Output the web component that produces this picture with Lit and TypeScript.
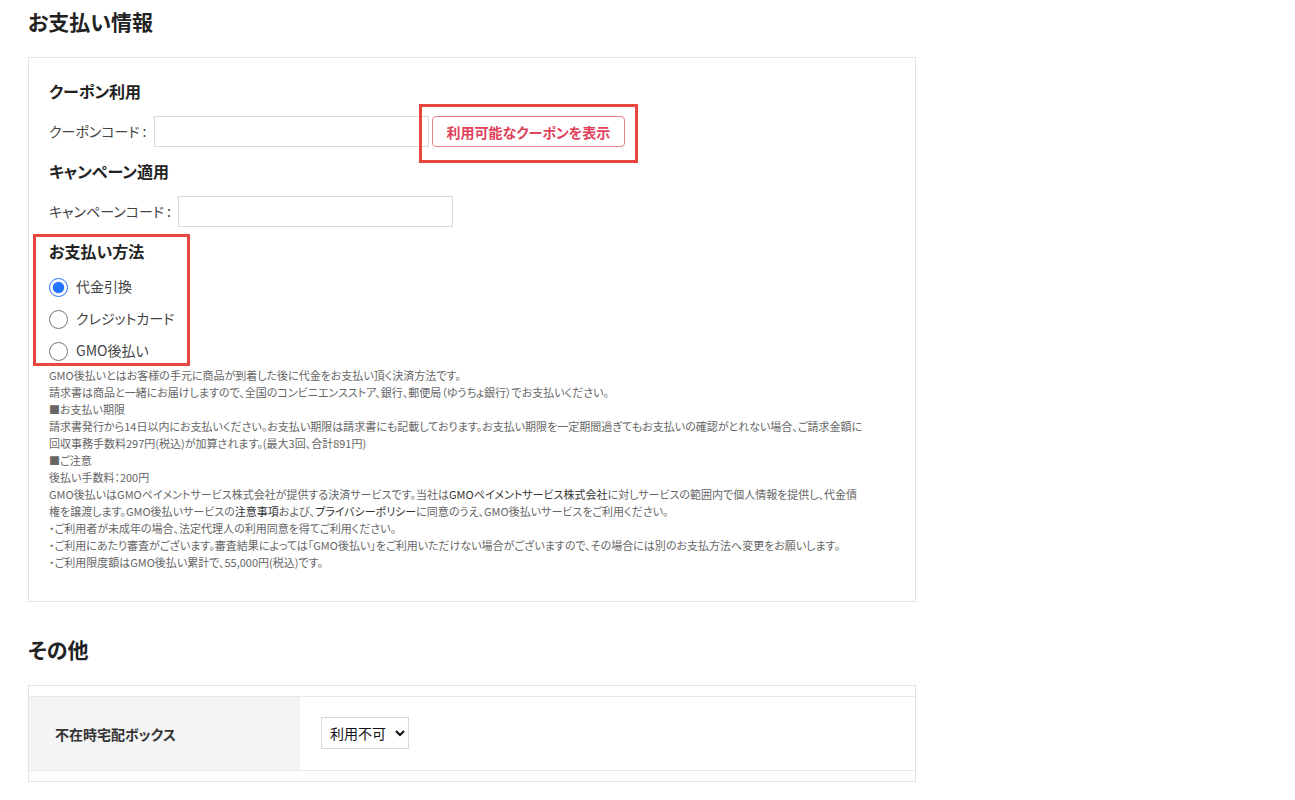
import { LitElement, html, css } from "lit";
import { customElement, state } from "lit/decorators.js";

interface PaymentMethod {
  id: string;
  label: string;
}

const METHODS: PaymentMethod[] = [
  { id: "cod", label: "代金引換" },
  { id: "card", label: "クレジットカード" },
  { id: "gmo", label: "GMO後払い" },
];

@customElement("app-root")
export class AppRoot extends LitElement {
  @state() private method = "cod";

  static styles = css`
    :host {
      display: block;
      font-family: "Noto Sans CJK JP", sans-serif;
      font-feature-settings: "palt";
      font-size: 14px;
      line-height: 24px;
      color: #444;
      background: #fff;
    }
    *,
    *::before {
      box-sizing: border-box;
    }
    .page {
      max-width: 944px;
      padding: 3px 28px 16px;
    }
    h2 {
      margin: 0 0 18px;
      font-size: 21px;
      line-height: 36px;
      font-weight: 700;
      color: #222;
    }
    h3 {
      margin: 0 0 1px;
      font-size: 16px;
      line-height: 24px;
      font-weight: 700;
      color: #222;
    }
    .panel {
      border: 1px solid #e3e3e3;
      margin-bottom: 29px;
    }
    .payment {
      display: flex;
      flex-direction: column;
      gap: 12px;
      padding: 21px 20px 30px;
    }
    .row {
      display: flex;
      align-items: center;
      gap: 3px;
    }
    .row label {
      padding: 0 4px 2px 0;
    }
    .field {
      width: 275px;
      height: 31px;
      padding: 0 8px;
      border: 1px solid #d9d9d9;
      border-radius: 0;
      background: #fff;
      font: inherit;
      color: inherit;
    }
    .action {
      position: relative;
    }
    .coupon {
      display: block;
      height: 31px;
      padding: 0 14px;
      border: 1px solid #e8808c;
      border-radius: 4px;
      background: #fff;
      font: inherit;
      font-feature-settings: inherit;
      font-weight: 700;
      color: #e0405a;
      white-space: nowrap;
    }
    .mark {
      position: absolute;
      border: 3px solid #e8473f;
      pointer-events: none;
    }
    .mark-coupon {
      inset: -12px -13px -16px -13px;
    }
    .mark-method {
      inset: -5px -16px 1px -16px;
    }
    .methods {
      position: relative;
      align-self: flex-start;
    }
    .method-list {
      margin-top: 8px;
    }
    .option {
      display: flex;
      align-items: center;
      gap: 8px;
      height: 32px;
    }
    .option span {
      padding-bottom: 2px;
    }
    .option input {
      width: 19px;
      height: 19px;
      margin: 0;
      accent-color: #2374ff;
    }
    .note {
      font-size: 11px;
      line-height: 17px;
      color: #666;
      margin-top: -12px;
    }
    .note p {
      margin: 0;
    }
    .note a {
      color: #333;
      text-decoration: none;
    }
    .other {
      padding: 10px 0;
    }
    table {
      width: 100%;
      border-collapse: collapse;
      border-top: 1px solid #e8e8e8;
      border-bottom: 1px solid #e8e8e8;
    }
    th {
      width: 271px;
      padding: 21px 26px;
      background: #f4f4f4;
      text-align: left;
      font-weight: 700;
      color: #333;
    }
    td {
      padding: 20px 21px 21px;
    }
    select {
      display: block;
      width: 88px;
      height: 32px;
      padding: 0 0 0 4px;
      border: 1px solid #d9d9d9;
      border-radius: 0;
      background: #fff;
      font: inherit;
      font-feature-settings: inherit;
      color: #111;
    }
  `;

  render() {
    return html`
      <main class="page">
        <h2>お支払い情報</h2>
        <section class="panel payment">
          <h3>クーポン利用</h3>
          <div class="row">
            <label for="coupon">クーポンコード :</label>
            <input class="field" id="coupon" type="text" />
            <div class="action">
              <button class="coupon" type="button">利用可能なクーポンを表示</button>
              <div class="mark mark-coupon"></div>
            </div>
          </div>
          <h3>キャンペーン適用</h3>
          <div class="row">
            <label for="campaign">キャンペーンコード :</label>
            <input class="field" id="campaign" type="text" />
          </div>
          <div class="methods" role="radiogroup" aria-labelledby="method-title">
            <h3 id="method-title">お支払い方法</h3>
            <div class="method-list">
              ${METHODS.map(
                (m) => html`
                  <label class="option">
                    <input
                      type="radio"
                      name="method"
                      .checked=${this.method === m.id}
                      @change=${() => (this.method = m.id)}
                    />
                    <span>${m.label}</span>
                  </label>
                `
              )}
            </div>
            <div class="mark mark-method"></div>
          </div>
          <div class="note">
            <p>GMO後払いとはお客様の手元に商品が到着した後に代金をお支払い頂く決済方法です。</p>
            <p>請求書は商品と一緒にお届けしますので、全国のコンビニエンスストア、銀行、郵便局（ゆうちょ銀行）でお支払いください。</p>
            <p>■お支払い期限</p>
            <p>請求書発行から14日以内にお支払いください。お支払い期限は請求書にも記載しております。お支払い期限を一定期間過ぎてもお支払いの確認がとれない場合、ご請求金額に<br />回収事務手数料297円(税込)が加算されます。(最大3回、合計891円)</p>
            <p>■ご注意</p>
            <p>後払い手数料：200円</p>
            <p>GMO後払いはGMOペイメントサービス株式会社が提供する決済サービスです。当社は<a href="#company">GMOペイメントサービス株式会社</a>に対しサービスの範囲内で個人情報を提供し、代金債<br />権を譲渡します。GMO後払いサービスの<a href="#notes">注意事項</a>および、<a href="#privacy">プライバシーポリシー</a>に同意のうえ、GMO後払いサービスをご利用ください。</p>
            <p>・ご利用者が未成年の場合、法定代理人の利用同意を得てご利用ください。</p>
            <p>・ご利用にあたり審査がございます。審査結果によっては「GMO後払い」をご利用いただけない場合がございますので、その場合には別のお支払方法へ変更をお願いします。</p>
            <p>・ご利用限度額はGMO後払い累計で、55,000円(税込)です。</p>
          </div>
        </section>

        <h2>その他</h2>
        <section class="panel other">
          <table>
            <tbody>
              <tr>
                <th scope="row"><label for="box">不在時宅配ボックス</label></th>
                <td>
                  <select id="box">
                    <option>利用不可</option>
                    <option>利用可</option>
                  </select>
                </td>
              </tr>
            </tbody>
          </table>
        </section>
      </main>
    `;
  }
}
